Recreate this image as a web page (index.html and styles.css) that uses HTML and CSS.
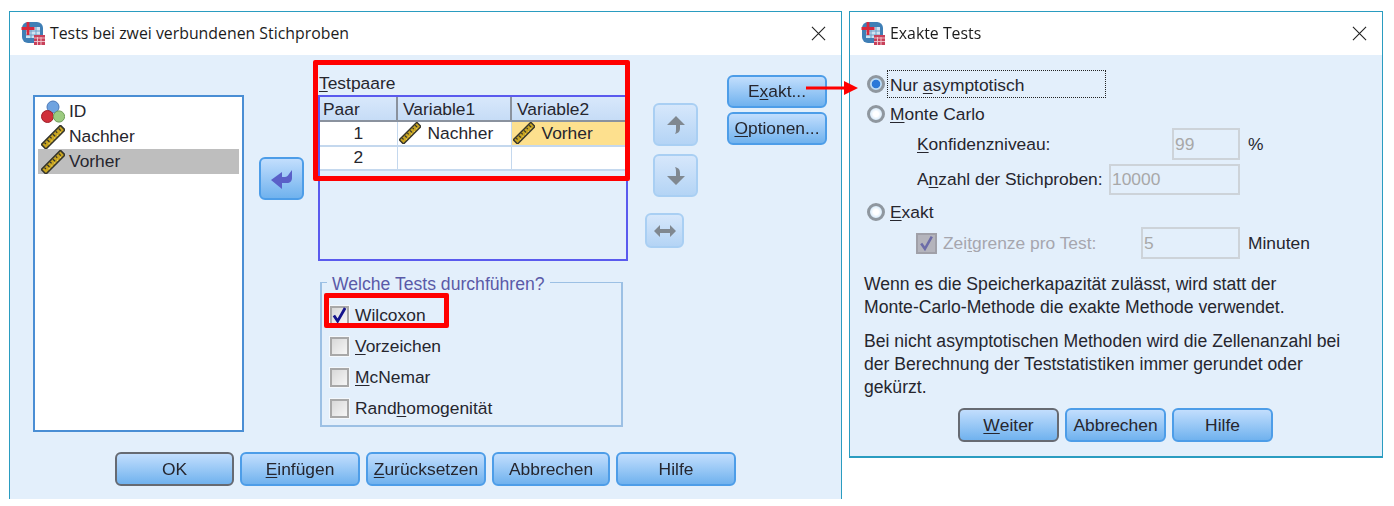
FILE: index.html
```html
<!DOCTYPE html>
<html lang="de">
<head>
<meta charset="utf-8">
<title>Tests bei zwei verbundenen Stichproben</title>
<link rel="stylesheet" href="styles.css">
</head>
<body>
<svg class="defs" width="0" height="0" aria-hidden="true">
  <defs>
    <symbol id="ruler" viewBox="0 0 24 24">
      <g transform="rotate(-45 12 12)">
        <rect x="-1.500" y="9" width="27" height="6.500" fill="#c8a420" stroke="#35352c" stroke-width="1.600"/>
        <path d="M2 10v2M6 10v3M10 10v2M14 10v3M18 10v2M22 10v3" stroke="#35352c" stroke-width="1.300"/>
        <path d="M4 14h1M8 14h1M12 14h1M16 14h1M20 14h1" stroke="#f4e070" stroke-width="1.100"/>
      </g>
    </symbol>
    <symbol id="nominal" viewBox="0 0 24 24">
      <circle cx="12" cy="7" r="6" fill="#6fa3e0" stroke="#4a78b8"/>
      <circle cx="6.500" cy="16.500" r="6" fill="#d0303a" stroke="#a01c28"/>
      <circle cx="18" cy="16.500" r="5.600" fill="#9ccb80" stroke="#6e9c58"/>
    </symbol>
    <symbol id="app" viewBox="0 0 24 24">
      <rect x="1" y="1" width="21" height="21" rx="6" fill="#3f7fb6"/>
      <rect x="5" y="6" width="14" height="11" fill="#cfe2f2"/>
      <path d="M5 10h14M5 14h14M10 6v11M15 6v11" stroke="#6fa0c8" stroke-width="1"/>
      <path d="M0.500 7.500h13M7 1v13" stroke="#d8283c" stroke-width="2.800"/>
      <rect x="13" y="14" width="11" height="10" fill="#c8405a"/>
      <path d="M13 17h11M13 20.500h11M16.500 16v8M20 16v8" stroke="#f0c8d0" stroke-width="0.900"/>
    </symbol>
    <symbol id="close" viewBox="0 0 16 16">
      <path d="M1 1l14 14M15 1L1 15" stroke="#222" stroke-width="1.200" fill="none"/>
    </symbol>
  </defs>
</svg>

<div class="desktop">
  <section class="dialog dialog-main">
    <header class="titlebar">
      <svg class="app-icon"><use href="#app"/></svg>
      <span class="title">Tests bei zwei verbundenen Stichproben</span>
      <svg class="close-icon"><use href="#close"/></svg>
    </header>
    <div class="body">
      <div class="main-row">
        <ul class="varlist">
          <li class="var"><svg class="var-icon"><use href="#nominal"/></svg>ID</li>
          <li class="var"><svg class="var-icon"><use href="#ruler"/></svg>Nachher</li>
          <li class="var var-selected"><svg class="var-icon"><use href="#ruler"/></svg>Vorher</li>
        </ul>
        <button class="btn icon-btn move-btn" type="button" aria-label="Verschieben">
          <svg width="24" height="22" viewBox="0 0 24 22"><path d="M22 2v8c0 3-2 5-5 5h-5v6L1 12l11-8v5h3c1.500 0 3-1 4-3z" fill="#5a60c8"/></svg>
        </button>
        <div class="center-col">
          <div class="pairs-label"><u>T</u>estpaare</div>
          <div class="pairs-box">
            <table class="pairs">
              <colgroup><col class="c1"><col class="c2"><col class="c3"></colgroup>
              <thead><tr><th>Paar</th><th>Variable1</th><th>Variable2</th></tr></thead>
              <tbody>
                <tr><td class="num">1</td><td><svg class="cell-icon"><use href="#ruler"/></svg>Nachher</td><td class="cell-active"><svg class="cell-icon"><use href="#ruler"/></svg>Vorher</td></tr>
                <tr><td class="num">2</td><td></td><td></td></tr>
              </tbody>
            </table>
          </div>
          <fieldset class="tests">
            <legend>Welche Tests durchführen?</legend>
            <label class="check-row"><span class="check checked"><svg viewBox="0 0 16 16"><path d="M2 8l4 6L14 0" fill="none" stroke="#14148c" stroke-width="3"/></svg></span><span><u>W</u>ilcoxon</span></label>
            <label class="check-row"><span class="check"></span><span><u>V</u>orzeichen</span></label>
            <label class="check-row"><span class="check"></span><span><u>M</u>cNemar</span></label>
            <label class="check-row"><span class="check"></span><span>Rand<u>h</u>omogenität</span></label>
          </fieldset>
        </div>
        <div class="arrow-col">
          <button class="btn icon-btn off" type="button" aria-label="Nach oben">
            <svg width="20" height="20" viewBox="0 0 20 20"><path d="M10 1l9 9h-5v3c0 3-1 5-5 6 1-2 1-3 1-6v-3H1z" fill="#808890"/></svg>
          </button>
          <button class="btn icon-btn off" type="button" aria-label="Nach unten">
            <svg width="20" height="20" viewBox="0 0 20 20"><path d="M10 19l9-9h-5V7c0-3-1-5-5-6 1 2 1 3 1 6v3H1z" fill="#808890"/></svg>
          </button>
          <button class="btn icon-btn off swap" type="button" aria-label="Tauschen">
            <svg width="24" height="14" viewBox="0 0 24 14"><path d="M1 7l6-6v4h10V1l6 6-6 6V9H7v4z" fill="#808890"/></svg>
          </button>
        </div>
        <div class="side-col">
          <button class="btn side-btn" type="button">E<u>x</u>akt...</button>
          <button class="btn side-btn" type="button"><u>O</u>ptionen...</button>
        </div>
      </div>
      <div class="button-row">
        <button class="btn wide default" type="button">OK</button>
        <button class="btn wide" type="button"><u>E</u>infügen</button>
        <button class="btn wide" type="button"><u>Z</u>urücksetzen</button>
        <button class="btn wide w118" type="button">Abbrechen</button>
        <button class="btn wide" type="button">Hilfe</button>
      </div>
    </div>
  </section>

  <section class="dialog dialog-exact">
    <header class="titlebar">
      <svg class="app-icon"><use href="#app"/></svg>
      <span class="title">Exakte Tests</span>
      <svg class="close-icon"><use href="#close"/></svg>
    </header>
    <div class="body exact-body">
      <div class="radio-row first"><span class="radio on"></span><span class="focus">Nur <u>a</u>symptotisch</span></div>
      <div class="radio-row"><span class="radio"></span><span class="radio-text"><u>M</u>onte Carlo</span></div>
      <div class="field-row r1"><span class="lbl l1"><u>K</u>onfidenzniveau:</span><input class="inp i1" value="99" disabled><span class="unit">%</span></div>
      <div class="field-row r2"><span class="lbl l2">A<u>n</u>zahl der Stichproben:</span><input class="inp i2" value="10000" disabled></div>
      <div class="radio-row r3"><span class="radio"></span><span class="radio-text"><u>E</u>xakt</span></div>
      <div class="field-row r4"><span class="check disabled"><svg viewBox="0 0 16 16"><path d="M3 8l3.500 5L13 1.500" fill="none" stroke="#6c6ca8" stroke-width="2.400"/></svg></span><span class="lbl l3">Zei<u>t</u>grenze pro Test:</span><input class="inp i3" value="5" disabled><span class="unit">Minuten</span></div>
      <p class="note n1">Wenn es die Speicherkapazität zulässt, wird statt der<br>Monte-Carlo-Methode die exakte Methode verwendet.</p>
      <p class="note n2">Bei nicht asymptotischen Methoden wird die Zellenanzahl bei<br>der Berechnung der Teststatistiken immer gerundet oder<br>gekürzt.</p>
      <div class="button-row exact-buttons">
        <button class="btn w100 default" type="button"><u>W</u>eiter</button>
        <button class="btn w100" type="button">Abbrechen</button>
        <button class="btn w100" type="button">Hilfe</button>
      </div>
    </div>
  </section>

  <div class="mark mark-pairs"></div>
  <div class="mark mark-wilcoxon"></div>
  <svg class="mark-arrow" width="52" height="16" viewBox="0 0 52 16"><path d="M0 6.500h38V1l14 7-14 7V9.500H0z" fill="#f00"/></svg>
</div>
</body>
</html>
```
FILE: styles.css
```css
* { box-sizing: border-box; }
html, body { margin: 0; padding: 0; background: #fff; }
body { width: 1394px; height: 506px; overflow: hidden; font-family: "Liberation Sans", Arial, sans-serif; font-size: 17.4px; color: #26262e; }
.defs { position: absolute; }
.desktop { position: relative; display: flex; align-items: flex-start; gap: 7px; padding: 11px 0 0 9px; height: 506px; filter: blur(0.35px); }
.dialog { border: 1px solid #2a9cc0; background: #fff; display: flex; flex-direction: column; }
.dialog-main { width: 833px; height: 488px; border-bottom: 0; }
.dialog-exact { width: 534px; height: 447px; border-width: 1px 1px 2px; }
.titlebar { height: 43px; display: flex; align-items: center; padding: 0 15px 1px 11px; flex: none; }
.app-icon { width: 24px; height: 24px; margin-right: 5px; flex: none; }
.title { flex: 1; font-family: "Open Sans", sans-serif; font-size: 15.85px; color: #1c1c1c; white-space: nowrap; }
.close-icon { width: 15px; height: 15px; flex: none; }
.body { flex: 1; background: #e3effb; display: flex; flex-direction: column; }
.main-row { display: flex; align-items: flex-start; }

.varlist { list-style: none; margin: 40px 0 0 23px; padding: 2px 3px; width: 211px; height: 337px; background: #fff; border: 2px solid #4a8ed4; flex: none; }
.var { height: 25px; display: flex; align-items: center; padding-left: 3px; }
.var-selected { background: #bebebe; }
.var-icon { width: 24px; height: 24px; margin-right: 4px; flex: none; }

.btn { font: inherit; color: inherit; padding: 0; border: 2px solid #4d9de8; border-radius: 6px; background: linear-gradient(#c2defd, #70b2ee); display: flex; align-items: center; justify-content: center; flex: none; cursor: default; white-space: nowrap; }
.btn.default { border-color: #666a72; }
.icon-btn { width: 45px; height: 43px; }
.move-btn { margin: 102px 0 0 15px; }
.btn.off { background: linear-gradient(#d6e7fb, #b4d4f5); border-color: #a9cff3; }

.center-col { width: 312px; margin-left: 14px; flex: none; }
.pairs-label { height: 20px; margin-top: 20px; line-height: 16px; padding-left: 1px; }
.pairs-box { width: 310px; height: 166px; border: 2px solid #5a5aee; }
.pairs { width: 306px; border-collapse: collapse; table-layout: fixed; }
.c1 { width: 77px; }
.c2 { width: 114px; }
.c3 { width: 115px; }
.pairs th { height: 24px; padding: 1px 0 0 5px; text-align: left; font-weight: 400; background: linear-gradient(#d8e8fb, #c6dcf6); border-right: 2px solid #8a929e; border-bottom: 2px solid #8a929e; }
.pairs th:first-child { padding-left: 3px; }
.pairs th:last-child { border-right: 0; }
.pairs td { height: 23px; padding: 0 0 1px; background: #fff; border-right: 1px solid #c4d8ee; border-bottom: 2px solid #c4d8ee; white-space: nowrap; }
.pairs td:last-child { border-right: 0; }
.pairs td.num { text-align: center; }
.pairs td.cell-active { background: #fde08e; }
.cell-icon { width: 22px; height: 22px; margin: 0 7px 0 1px; vertical-align: -5px; }

.tests { margin: 10px 0 0 2px; padding: 0 0 0 8px; width: 303px; height: 156px; border: 2px solid #9cc0e4; border-width: 1px 2px 2px 2px; min-width: 0; }
.tests legend { padding: 4px 5px 0; margin-left: -3px; color: #5a5aa8; font-size: 17.6px; line-height: 18px; }
.check-row { display: flex; align-items: center; height: 31px; gap: 6px; }
.check-row:first-of-type { margin-top: 7px; }
.check { width: 19px; height: 19px; border: 2px solid #a8a8a8; outline: 1px solid #f4f8fc; background: linear-gradient(135deg, #d8d8d8, #f6f6f6); display: block; flex: none; }
.check svg { display: block; width: 15px; height: 15px; overflow: visible; }

.arrow-col { margin: 48px 0 0 23px; display: flex; flex-direction: column; gap: 8px; width: 45px; flex: none; }
.arrow-col .swap { width: 39px; height: 35px; margin: 8px 0 0 -8px; }
.side-col { margin: 20px 0 0 29px; display: flex; flex-direction: column; gap: 4px; flex: none; }
.side-btn { width: 100px; height: 33px; }

.button-row { display: flex; gap: 6px; margin: 20px 0 0 105px; }
.wide { width: 120px; height: 34px; }
.wide.default { width: 119px; }
.wide.w118 { width: 118px; }

.exact-body { padding: 15px 0 0 17px; }
.radio-row { display: flex; align-items: center; height: 28px; }
.radio-row + .radio-row { margin-top: 2px; }
.radio-row .radio-text { margin-left: 5px; }
.radio-row.r3 { margin-top: 3px; }
.radio { width: 18px; height: 18px; border-radius: 50%; border: 3px solid #8f979f; background: radial-gradient(circle, #fff 30%, #bcdcf6 100%); flex: none; }
.radio.on { background: radial-gradient(circle, #2a78d8 45%, #bcdcf6 55%); }
.focus { margin-left: 2px; width: 219px; height: 28px; border: 1px dotted #222; display: flex; align-items: center; padding: 2px 0 0 2px; white-space: pre; }
.field-row { display: flex; align-items: center; padding-left: 50px; }
.lbl { white-space: nowrap; flex: none; }
.l1 { width: 255px; }
.l2 { width: 192px; }
.l3 { width: 198px; margin-left: 6px; color: #a6a6ae; }
.r1 { height: 32px; }
.r2 { height: 31px; margin-top: 4px; }
.r4 { height: 32px; margin-top: 1px; padding-left: 49px; }
.inp { font: inherit; color: #a8a8a8; background: #e3effb; border: 2px solid #cdd3d9; height: 100%; padding: 0 0 0 1px; margin: 0; flex: none; }
.i1 { width: 68px; }
.i2 { width: 131px; }
.i3 { width: 99px; }
.unit { margin-left: 8px; }
.check.disabled { width: 21px; height: 21px; border-color: #a0a0a8; background: #b4b4bc; outline: 0; }
.check.disabled svg { width: 17px; height: 17px; }
.note { margin: 14px 0 0 -3px; line-height: 23px; font-size: 17.6px; white-space: nowrap; }
.note.n2 { margin-top: 11px; }
.button-row.exact-buttons { margin: 9px 0 0 91px; gap: 6px; }
.w100 { width: 101px; height: 34px; }

.mark { position: absolute; border: 5px solid #f00; border-radius: 2px; }
.mark-pairs { left: 313px; top: 60px; width: 317px; height: 121px; }
.mark-wilcoxon { left: 324px; top: 293px; width: 125px; height: 35px; }
.mark-arrow { position: absolute; left: 806px; top: 80px; }
u { text-underline-offset: 2px; }
```
